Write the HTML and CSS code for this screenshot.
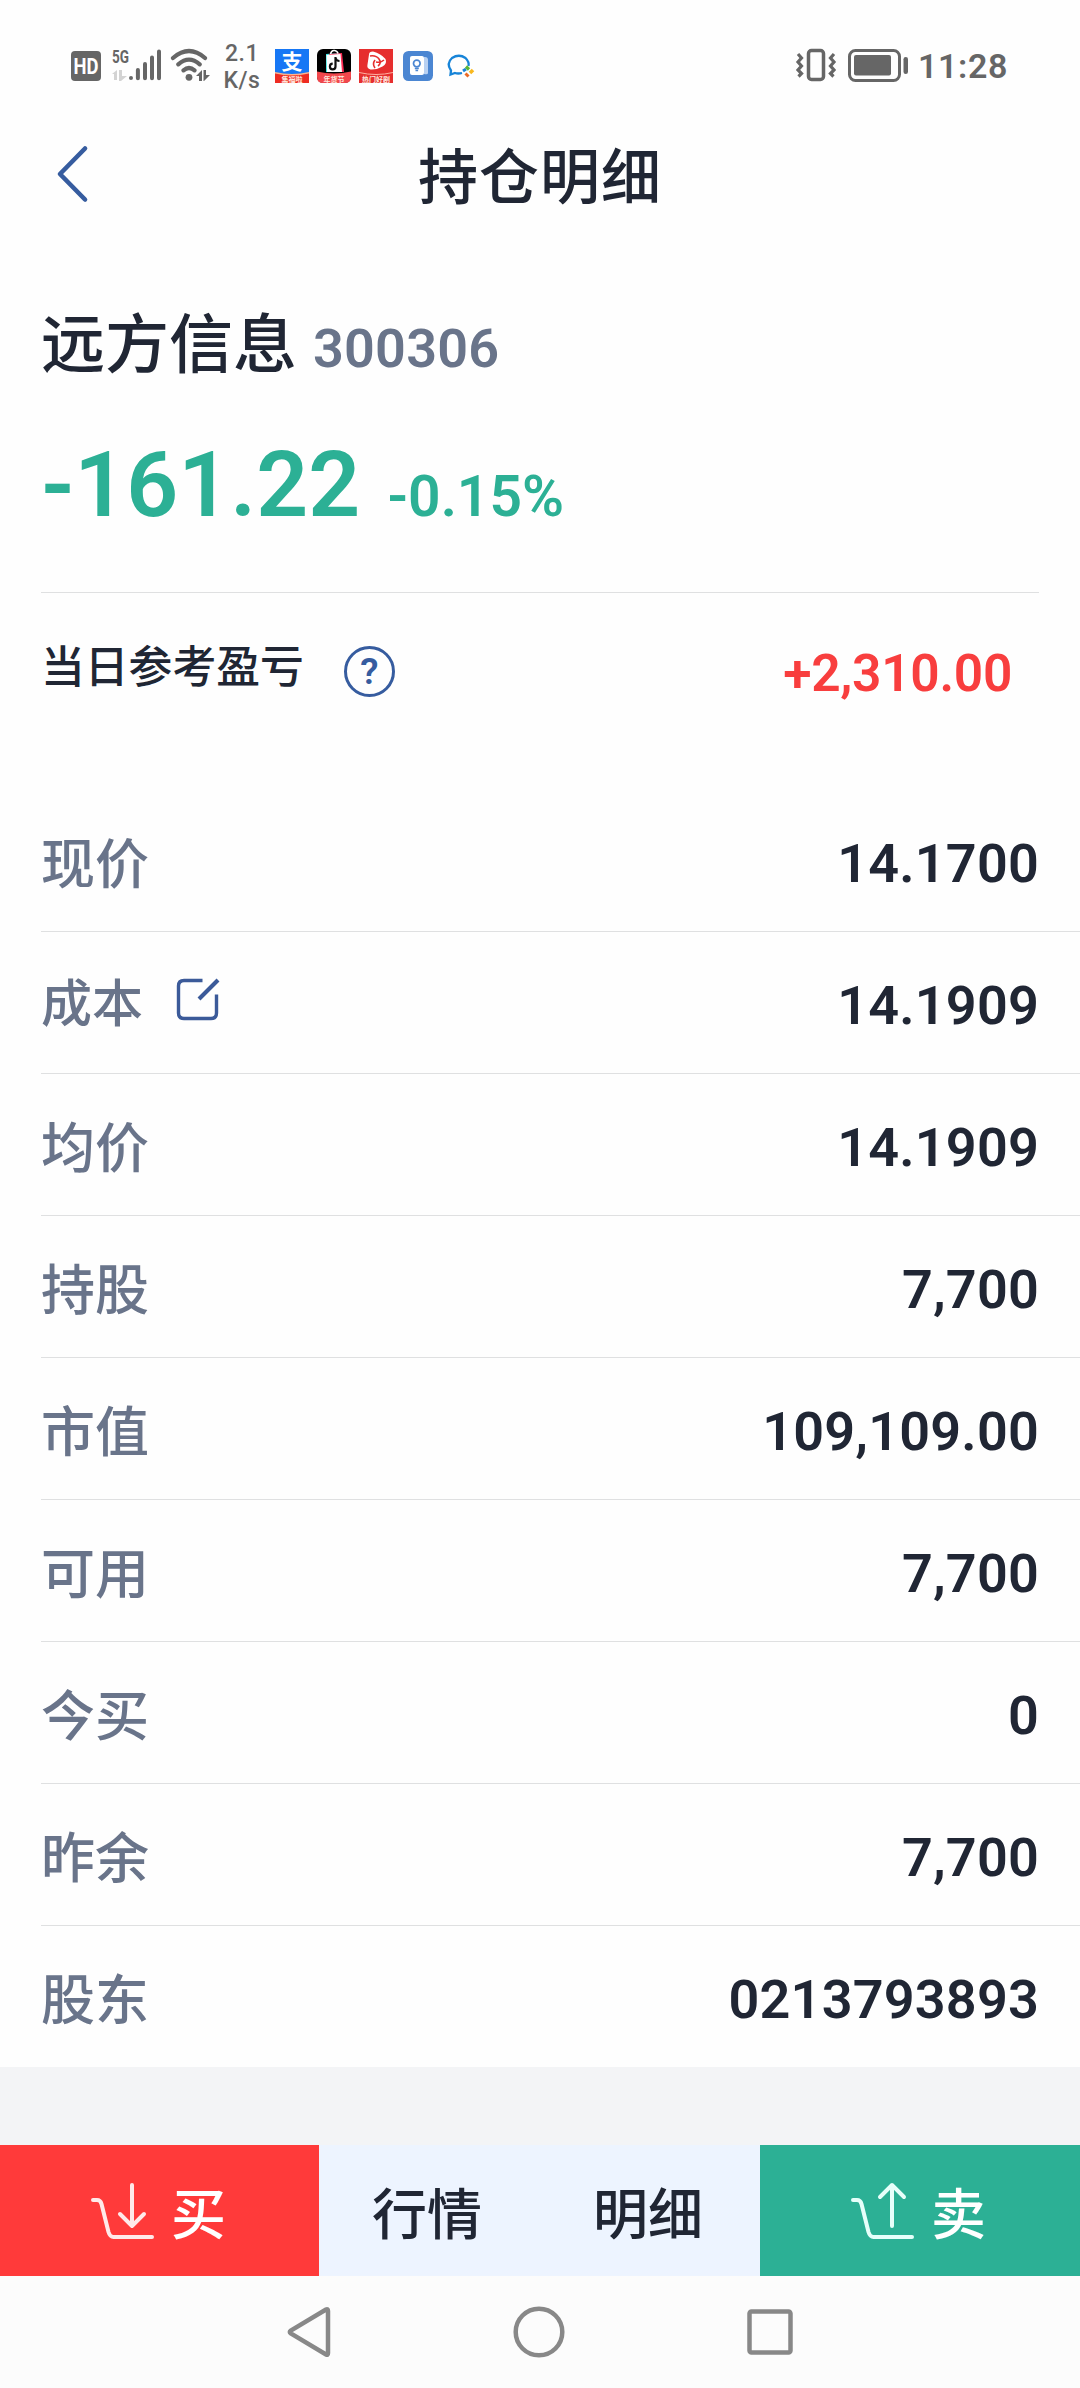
FILE: index.html
```html
<!DOCTYPE html>
<html lang="zh-CN">
<head>
<meta charset="utf-8">
<title>持仓明细</title>
<link rel="stylesheet" href="styles.css">
</head>
<body>
<div class="screen">
  <div class="status">
    <svg class="signal" width="140" height="40" viewBox="70 46 140 40">
      <rect x="71" y="51" width="30" height="30" rx="4" fill="#666"/>
      <text x="86" y="73.500" class="hd" text-anchor="middle" textLength="25" lengthAdjust="spacingAndGlyphs">HD</text>
      <text x="112" y="63" class="fiveg" textLength="17" lengthAdjust="spacingAndGlyphs">5G</text>
      <path d="M112 74l5-4v10h-3v-6zM119 70h3v6h5l-6 5h-2z" fill="#d3d3d3"/>
      <path d="M131 78v.1M137.900 70v8.200M145 64v14.200M152 57.500v20.700M159 51.500v26.700" stroke="#666" stroke-width="4" stroke-linecap="round"/>
      <g fill="none" stroke="#666" stroke-width="4.200" stroke-linecap="round">
        <path d="M173 58q16-14 32 0M178.300 64.300q10.700-9.300 21.400 0M183.500 70.300q5.500-4.600 11 0"/>
      </g>
      <circle cx="189" cy="77.300" r="3.400" fill="#666"/>
      <path d="M196 76l6-6v11h-3v-5zM203.500 70h2.500v5h4l-6 6h-.5z" fill="#666"/>
    </svg>
    <div class="speed"><span>2.1</span><span>K/s</span></div>
    <svg class="apps" width="202" height="48" viewBox="274 37 202 48">
      <rect x="275" y="49" width="34" height="34" fill="#1677f5"/>
      <text x="292" y="69" class="ali" text-anchor="middle">支</text>
      <path d="M275 73q17 4 34 0v10h-34z" fill="#ee2b22"/>
      <path d="M275 72q17 4 34 0v1.500q-17 4-34 0z" fill="#ffb28a"/>
      <text x="292" y="82" class="tag" text-anchor="middle">集福啦</text>
      <rect x="317" y="49" width="34" height="34" rx="6" fill="#000"/>
      <path d="M326 54l14-1 3 19-17 0z" fill="#38e8e4"/><path d="M329 54l13-1 2 19h-13z" fill="#fe2c55"/><path d="M326.500 55l14-1 1.500 18h-15z" fill="#fff"/>
      <path d="M330.500 54q1-4 4-3.500t3.500 3" fill="none" stroke="#fff" stroke-width="1.500"/>
      <path d="M335.500 57v9.500a2.800 2.800 0 1 1-2.800-2.800M335.500 58q1 3 4 3" fill="none" stroke="#111" stroke-width="2.200"/>
      <path d="M317 71.500q17 4 34 0V77q0 6-6 6h-22q-6 0-6-6z" fill="#f2474c"/>
      <text x="334" y="81.500" class="tag" text-anchor="middle">年货节</text>
      <rect x="359" y="49" width="34" height="34" fill="#e62e2e"/>
      <path d="M369 54.500q0-3 4-3 8 2 12.500 7.500 2 5-3 7.500-6 3.500-12 3-4-1-3-5z" fill="#fff"/>
      <path d="M370 56q6-1 9 3t-1 7M375 60q-3 4 0 8M384 60q-3 3-8 2" fill="none" stroke="#e62e2e" stroke-width="1.600"/>
      <path d="M359 72.500q17 4 34 0" fill="none" stroke="#ffb0a0"/>
      <text x="376" y="82" class="tag" text-anchor="middle">热门好剧</text>
      <rect x="403" y="51" width="30" height="30" rx="5.500" fill="#4b86d2"/>
      <path d="M424 57h1q3 0 3 3v13q0 2-4 1z" fill="#b9d1f2"/><rect x="410" y="56" width="14" height="19" rx="2" fill="#fff"/>
      <circle cx="416.800" cy="63.500" r="3.300" fill="none" stroke="#4b86d2" stroke-width="1.700"/><path d="M414.800 68.500h4M415.500 70.500h2.600" stroke="#4b86d2" stroke-width="1.300"/>
      <path d="M462 73q-4 1-7 0l-4.500 1.500.5-4q-5-7 1-12.500 7-4.500 13.500 0 4 4 3 8" fill="none" stroke="#1784d8" stroke-width="2.300"/>
      <path d="M463 71l3-2" stroke="#1784d8" stroke-width="3"/><path d="M466 66.500l3 3" stroke="#5ab735" stroke-width="3.200"/><path d="M473 70l-3 3" stroke="#f9b81e" stroke-width="3.600"/><path d="M468.500 76.500l-3-3" stroke="#eb6a24" stroke-width="3"/>
    </svg>
    <svg class="power" width="114" height="36" viewBox="797 47 114 36">
      <g fill="none" stroke="#666">
        <rect x="810.500" y="50.500" width="15" height="29" rx="3" stroke-width="3.500"/>
        <path d="M800 54l3.500 4-3.500 4 3.500 4-3.500 4 3.500 3.500-3 3M836 54l-3.500 4 3.500 4-3.500 4 3.500 4-3.500 3.500 3 3" stroke-width="3.200"/>
        <rect x="851.500" y="50.500" width="50" height="30" rx="6" stroke-width="3"/>
      </g>
      <rect x="856" y="55" width="37" height="20.500" rx="2" fill="#666"/><rect x="905.500" y="57" width="4.500" height="17" rx="2.200" fill="#666"/>
    </svg>
    <span class="clock">11:28</span>
  </div>

  <header class="titlebar">
    <svg class="back" width="34" height="62" viewBox="0 0 34 62"><path d="M30 5.500L5 31 30 56.500" fill="none" stroke="#365c9f" stroke-width="4.600" stroke-linecap="round" stroke-linejoin="round"/></svg>
    <h1>持仓明细</h1>
  </header>

  <section class="summary">
    <div class="stock"><span class="name">远方信息</span><span class="code">300306</span></div>
    <div class="profit"><span class="amount">-161.22</span><span class="rate">-0.15%</span></div>
  </section>

  <section class="today">
    <span class="today-label">当日参考盈亏</span>
    <span class="help">?</span>
    <span class="today-value">+2,310.00</span>
  </section>

  <section class="details">
    <div class="row"><span class="label">现价</span><span class="value">14.1700</span></div>
    <div class="row"><span class="label label-cost">成本</span><svg class="edit" width="44" height="44" viewBox="0 0 44 44" fill="none" stroke="#3b5a99" stroke-width="3.400"><path d="M26.500 3.500H8Q2.500 3.500 2.500 9v27q0 5.500 5.500 5.500h27q5.500 0 5.500-5.500V17.500"/><path d="M42 3L23 22" stroke-width="4"/></svg><span class="value">14.1909</span></div>
    <div class="row"><span class="label">均价</span><span class="value">14.1909</span></div>
    <div class="row"><span class="label">持股</span><span class="value">7,700</span></div>
    <div class="row"><span class="label">市值</span><span class="value">109,109.00</span></div>
    <div class="row"><span class="label">可用</span><span class="value">7,700</span></div>
    <div class="row"><span class="label">今买</span><span class="value">0</span></div>
    <div class="row"><span class="label">昨余</span><span class="value">7,700</span></div>
    <div class="row"><span class="label">股东</span><span class="value">0213793893</span></div>
  </section>

  <div class="spacer"></div>

  <div class="actions">
    <div class="buy">
      <svg width="64" height="58" viewBox="0 0 64 58" fill="none" stroke="#ffe9e9" stroke-width="4" stroke-linecap="round" stroke-linejoin="round"><path d="M2 18h4q3.500 0 4.500 4l7 28q1.500 5 5 5H61M41 3v41M29 32l12 12 12-12"/></svg>
      <span>买</span>
    </div>
    <div class="links"><span>行情</span><span>明细</span></div>
    <div class="sell">
      <svg width="64" height="58" viewBox="0 0 64 58" fill="none" stroke="#e6fffa" stroke-width="4" stroke-linecap="round" stroke-linejoin="round"><path d="M2 18h4q3.500 0 4.500 4l7 28q1.500 5 5 5H61M41 44V3M29 15L41 3l12 12"/></svg>
      <span>卖</span>
    </div>
  </div>

  <nav class="sysnav">
    <svg width="44" height="52" viewBox="0 0 44 52"><path d="M39 3.500Q41 2.500 41 5v42q0 2.500-2 1.500L3.800 27.500q-2-1.500 0-3z" fill="none" stroke="#888" stroke-width="4.500"/></svg>
    <svg width="52" height="52" viewBox="0 0 52 52"><circle cx="26" cy="26" r="23.300" fill="none" stroke="#888" stroke-width="4.500"/></svg>
    <svg width="46" height="46" viewBox="0 0 46 46"><rect x="2.500" y="2.500" width="41" height="41" rx="2" fill="none" stroke="#888" stroke-width="4.500"/></svg>
  </nav>
</div>
</body>
</html>
```
FILE: styles.css
```css
* { box-sizing: border-box; }

body {
  margin: 0;
  background: #fefefe;
  color: #202634;
  font-family: Roboto, "Noto Sans CJK SC", sans-serif;
  font-weight: 600;
}

svg { display: block; flex: none; }

.screen {
  width: 1080px;
  height: 2388px;
  display: flex;
  flex-direction: column;
  overflow: hidden;
}

.status {
  height: 120px;
  display: flex;
  align-items: flex-start;
  padding: 0 72px 0 70px;
  color: #666;
}
.signal { margin-top: 46px; }
.hd { font: 700 22px Roboto, sans-serif; fill: #fff; }
.fiveg { font: 700 19px Roboto, sans-serif; fill: #666; }
.speed {
  width: 64px;
  margin-top: 40px;
  display: flex;
  flex-direction: column;
  align-items: center;
  font-size: 23px;
  font-weight: 500;
  line-height: 27px;
  letter-spacing: 0.5px;
}
.apps { margin-top: 37px; }
.ali { font: 700 21px "Noto Sans CJK SC", sans-serif; fill: #fff; }
.tag { font: 700 7px "Noto Sans CJK SC", sans-serif; fill: #ffe8df; }
.power { margin: 47px 0 0 auto; }
.clock {
  margin: 44px 0 0 9px;
  font-size: 34px;
  line-height: 44px;
  letter-spacing: 0.6px;
}

.titlebar {
  height: 110px;
  display: grid;
  grid-template-columns: 1fr auto 1fr;
  align-items: center;
  padding: 0 55px;
}
.titlebar h1 {
  margin: -4px 0 0;
  font: 500 60px/100px "Noto Sans CJK SC", sans-serif;
  letter-spacing: 1px;
}
.back { margin-bottom: 3px; }

.summary {
  height: 363px;
  margin: 0 41px;
  padding-top: 59px;
  border-bottom: 1px solid #dfe0e1;
}
.stock {
  display: flex;
  align-items: baseline;
  line-height: 100px;
}
.name {
  font-family: "Noto Sans CJK SC", sans-serif;
  font-size: 64px;
  font-weight: 500;
}
.code {
  margin-left: 16px;
  font-size: 54px;
  letter-spacing: 0.2px;
  color: #69748a;
}
.profit {
  display: flex;
  align-items: baseline;
  margin-top: 31px;
  line-height: 110px;
  color: #2cb095;
}
.amount { font-size: 91px; letter-spacing: 0; }
.rate { margin-left: 27px; font-size: 57px; }

.today {
  height: 197px;
  display: flex;
  align-items: flex-start;
  padding: 0 68px 0 41px;
}
.today-label {
  margin-top: 39px;
  font: 500 43.800px/64px "Noto Sans CJK SC", sans-serif;
}
.help {
  width: 51px;
  height: 51px;
  margin: 53px 0 0 40px;
  border: 3px solid #365c9f;
  border-radius: 50%;
  color: #365c9f;
  font-size: 37px;
  line-height: 46px;
  text-align: center;
}
.today-value {
  margin: 46px 0 0 auto;
  font-size: 51.500px;
  line-height: 70px;
  letter-spacing: -0.3px;
  color: #f83e3e;
}

.details { padding-left: 41px; }
.row {
  height: 142px;
  display: flex;
  align-items: center;
  padding-right: 41px;
  border-bottom: 1px solid #dfe0e1;
}
.row:last-child { height: 141px; border-bottom: 0; }
.label {
  font: 500 54px/80px "Noto Sans CJK SC", sans-serif;
  color: #69748a;
}
.label-cost { font-size: 51px; margin-top: -6px; }
.edit { margin: -8px 0 0 33px; }
.value {
  margin-left: auto;
  padding-top: 6px;
  font-size: 54px;
  line-height: 80px;
  letter-spacing: 0.2px;
}

.spacer { flex: 1; background: #f3f4f6; }

.actions {
  height: 131px;
  display: grid;
  grid-template-columns: 319px 441px 320px;
  font: 500 55px/80px "Noto Sans CJK SC", sans-serif;
}
.buy, .sell {
  display: flex;
  align-items: center;
  padding-left: 91px;
  gap: 16px;
  color: #fff;
}
.buy { background: #ff3a3a; }
.sell { background: #2cb095; }
.buy span, .sell span, .links span { margin-top: -2px; }
.links {
  display: flex;
  align-items: center;
  justify-content: center;
  gap: 111px;
  padding-right: 4px;
  background: #edf4ff;
}

.sysnav {
  height: 112px;
  display: flex;
  align-items: center;
  justify-content: space-between;
  padding: 0 287px 0 287px;
  background: #fcfcfc;
}
```
